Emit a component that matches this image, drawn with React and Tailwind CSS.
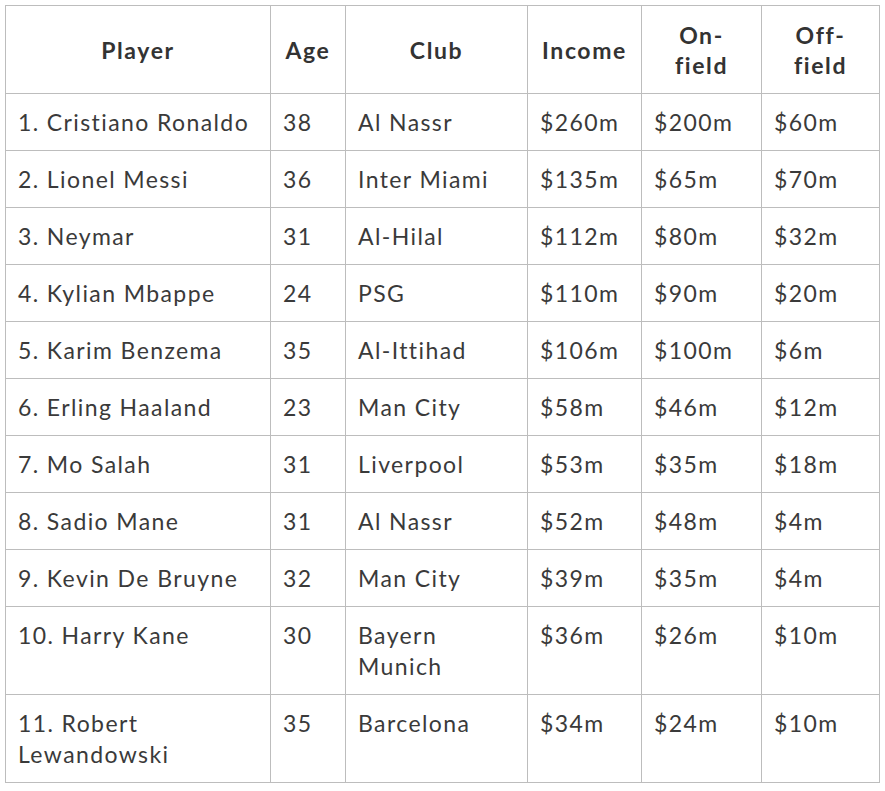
const rows = [
  ['1. Cristiano Ronaldo', '38', 'Al Nassr', '$260m', '$200m', '$60m'],
  ['2. Lionel Messi', '36', 'Inter Miami', '$135m', '$65m', '$70m'],
  ['3. Neymar', '31', 'Al-Hilal', '$112m', '$80m', '$32m'],
  ['4. Kylian Mbappe', '24', 'PSG', '$110m', '$90m', '$20m'],
  ['5. Karim Benzema', '35', 'Al-Ittihad', '$106m', '$100m', '$6m'],
  ['6. Erling Haaland', '23', 'Man City', '$58m', '$46m', '$12m'],
  ['7. Mo Salah', '31', 'Liverpool', '$53m', '$35m', '$18m'],
  ['8. Sadio Mane', '31', 'Al Nassr', '$52m', '$48m', '$4m'],
  ['9. Kevin De Bruyne', '32', 'Man City', '$39m', '$35m', '$4m'],
  ['10. Harry Kane', '30', 'Bayern Munich', '$36m', '$26m', '$10m'],
  ['11. Robert Lewandowski', '35', 'Barcelona', '$34m', '$24m', '$10m'],
]

const headers = ['Player', 'Age', 'Club', 'Income', 'On-field', 'Off-field']
const widths = ['w-[265px]', 'w-[75px]', 'w-[182px]', 'w-[114px]', 'w-[120px]', 'w-[118px]']

export default function App() {
  return (
    <div className="min-h-screen bg-white pl-[5px] pt-[5px] font-['Lato',sans-serif] text-[#333]">
      <table className="w-[874px] table-fixed border-collapse">
        <colgroup>
          {widths.map((w) => <col key={w} className={w} />)}
        </colgroup>
        <thead>
          <tr>
            {headers.map((h) => (
              <th
                key={h}
                className="h-[88px] border border-[#bdbdbd] px-3 text-center align-middle text-[23px] font-bold leading-[30px] tracking-[1.6px] text-[#333]"
              >
                {h === 'On-field' ? <>On-<br />field</> : h === 'Off-field' ? <>Off-<br />field</> : h}
              </th>
            ))}
          </tr>
        </thead>
        <tbody>
          {rows.map((r) => (
            <tr key={r[0]}>
              {r.map((c, i) => (
                <td
                  key={i}
                  className="border border-[#bdbdbd] px-3 py-[12.5px] align-top text-[23px] leading-[31px] tracking-[1.4px] text-[#3a3a3a]"
                >
                  {c}
                </td>
              ))}
            </tr>
          ))}
        </tbody>
      </table>
    </div>
  )
}
